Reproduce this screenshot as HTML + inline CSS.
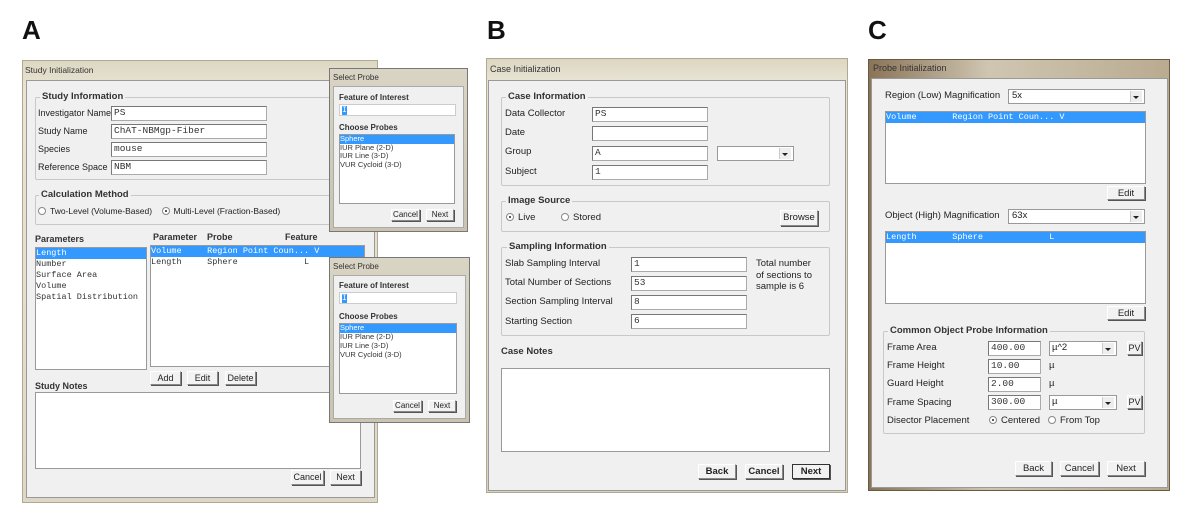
<!DOCTYPE html><html><head><style>
*{box-sizing:border-box;margin:0;padding:0}
body{width:1200px;height:523px;background:#fff;position:relative;overflow:hidden;font-family:"Liberation Sans",sans-serif;font-size:9.5px;color:#222}
.a{position:absolute}
.L{position:absolute;font-size:26px;font-weight:bold;color:#111}
.win{position:absolute;background:linear-gradient(90deg,#d9d4c0,#ebe7d6 60%,#d7d0bc);border:1px solid #b0a890}
.inner{position:absolute;background:#f0f0f0;border:1px solid #999}
.tt{position:absolute;font-size:9px;color:#333}
.fs{position:absolute;border:1px solid #c8c8c8;border-radius:2px}
.lg{position:absolute;background:#f0f0f0;font-weight:bold;padding:0 2px;font-size:9.5px;color:#333}
.in{position:absolute;background:#fff;border:1px solid #aaa;border-top-color:#777;border-left-color:#777;font-family:"Liberation Mono",monospace;font-size:9.5px;padding-left:2px;line-height:12px;color:#333}
.lst{position:absolute;background:#fff;border:1px solid #999;font-family:"Liberation Mono",monospace;font-size:8.5px;line-height:11px;color:#333}
.lst2{position:absolute;background:#fff;border:1px solid #999;font-size:8.5px;line-height:11px;color:#333}
.hl{background:#3399ff;color:#fff}
.btn{position:absolute;background:#f2f2f2;border:1px solid #888;border-top-color:#fff;border-left-color:#fff;box-shadow:1px 1px 0 #555;font-size:9.5px;text-align:center;line-height:13px;color:#222}
.dd{position:absolute;background:#fff;border:1px solid #999}
.dd:after{content:"";position:absolute;right:2px;top:1px;bottom:1px;width:11px;background:#eee;border-left:1px solid #ccc}
.dd i{position:absolute;right:5px;top:50%;margin-top:-1px;border:3px solid transparent;border-top:3px solid #222;z-index:2}
.rb{display:inline-block;width:8px;height:8px;border-radius:50%;border:1px solid #888;background:#fff;vertical-align:-1px;margin-right:4px;position:relative}
.rb.on:after{content:"";position:absolute;left:2px;top:2px;width:2px;height:2px;background:#222;border-radius:50%}
.pa .a{font-size:9px}
</style></head><body>
<div class="L" style="left:22px;top:15px">A</div>
<div class="L" style="left:487px;top:15px">B</div>
<div class="L" style="left:868px;top:15px">C</div>

<!-- Panel A -->
<div class="pa">
<div class="win" style="left:22px;top:60px;width:356px;height:443px;background:linear-gradient(180deg,#ddd8c4,#e9e5d4 30px,#ddd8c6)"></div>
<div class="tt" style="left:25px;top:65px;font-size:8.5px">Study Initialization</div>
<div class="inner" style="left:26px;top:80px;width:349px;height:418px"></div>
<div class="fs" style="left:35px;top:97px;width:300px;height:83px"></div>
<div class="lg" style="left:40px;top:91px">Study Information</div>
<div class="a" style="left:38px;top:108px">Investigator Name</div>
<div class="a" style="left:38px;top:126px">Study Name</div>
<div class="a" style="left:38px;top:144px">Species</div>
<div class="a" style="left:38px;top:162px">Reference Space</div>
<div class="in" style="left:111px;top:106px;width:156px;height:15px">PS</div>
<div class="in" style="left:111px;top:124px;width:156px;height:15px">ChAT-NBMgp-Fiber</div>
<div class="in" style="left:111px;top:142px;width:156px;height:15px">mouse</div>
<div class="in" style="left:111px;top:160px;width:156px;height:15px">NBM</div>
<div class="fs" style="left:35px;top:195px;width:300px;height:30px"></div>
<div class="lg" style="left:39px;top:189px">Calculation Method</div>
<div class="a" style="left:38px;top:206px;font-size:8.5px"><span class="rb"></span>Two-Level (Volume-Based) &nbsp;&nbsp;&nbsp;<span class="rb on"></span>Multi-Level (Fraction-Based)</div>
<div class="a" style="left:35px;top:234px;font-weight:bold;color:#333">Parameters</div>
<div class="a" style="left:153px;top:232px;font-weight:bold;color:#333">Parameter</div>
<div class="a" style="left:207px;top:232px;font-weight:bold;color:#333">Probe</div>
<div class="a" style="left:285px;top:232px;font-weight:bold;color:#333">Feature</div>
<div class="lst" style="left:35px;top:247px;width:112px;height:123px"><div class="hl">Length</div><div>Number</div><div>Surface Area</div><div>Volume</div><div>Spatial Distribution</div></div>
<div class="lst" style="left:150px;top:245px;width:215px;height:122px"><div class="hl" style="white-space:pre">Volume     Region Point Coun... V</div><div style="white-space:pre">Length     Sphere             L</div></div>
<div class="btn" style="left:150px;top:371px;width:31px;height:14px;font-size:9px">Add</div>
<div class="btn" style="left:187px;top:371px;width:31px;height:14px;font-size:9px">Edit</div>
<div class="btn" style="left:225px;top:371px;width:31px;height:14px;font-size:9px">Delete</div>
<div class="a" style="left:35px;top:381px;font-weight:bold;color:#333">Study Notes</div>
<div class="lst" style="left:35px;top:392px;width:326px;height:77px"></div>
<div class="btn" style="left:291px;top:470px;width:33px;height:15px;font-size:9px">Cancel</div>
<div class="btn" style="left:330px;top:470px;width:31px;height:15px;font-size:9px">Next</div>
</div>

<!-- select probe 1 -->
<div class="win" style="left:329px;top:68px;width:139px;height:164px;background:linear-gradient(#d9d4c4,#c9c3b0);border-color:#777"></div>
<div class="tt" style="left:333px;top:73px;font-size:8px">Select Probe</div>
<div class="inner" style="left:333px;top:86px;width:131px;height:142px;border-color:#aaa"></div>
<div class="a" style="left:339px;top:93px;font-size:8px;font-weight:bold;color:#333">Feature of Interest</div>
<div class="in" style="left:339px;top:104px;width:117px;height:12px;line-height:10px;border-color:#ccc"><span class="hl" style="font-size:8px">I</span></div>
<div class="a" style="left:339px;top:123px;font-size:8px;font-weight:bold;color:#333">Choose Probes</div>
<div class="lst2" style="left:339px;top:134px;width:116px;height:70px;font-size:7.5px;line-height:8.7px"><div class="hl">Sphere</div><div>IUR Plane (2-D)</div><div>IUR Line (3-D)</div><div>VUR Cycloid (3-D)</div></div>
<div class="btn" style="left:391px;top:209px;width:29px;height:12px;font-size:8px;line-height:10px">Cancel</div>
<div class="btn" style="left:426px;top:209px;width:28px;height:12px;font-size:8px;line-height:10px">Next</div>

<!-- select probe 2 -->
<div class="win" style="left:329px;top:257px;width:141px;height:166px;background:linear-gradient(#d9d4c4,#c9c3b0);border-color:#777"></div>
<div class="tt" style="left:333px;top:262px;font-size:8px">Select Probe</div>
<div class="inner" style="left:333px;top:275px;width:133px;height:144px;border-color:#aaa"></div>
<div class="a" style="left:339px;top:281px;font-size:8px;font-weight:bold;color:#333">Feature of Interest</div>
<div class="in" style="left:339px;top:292px;width:118px;height:12px;line-height:10px;border-color:#ccc"><span class="hl" style="font-size:8px">I</span></div>
<div class="a" style="left:339px;top:312px;font-size:8px;font-weight:bold;color:#333">Choose Probes</div>
<div class="lst2" style="left:339px;top:323px;width:118px;height:71px;font-size:7.5px;line-height:8.9px"><div class="hl">Sphere</div><div>IUR Plane (2-D)</div><div>IUR Line (3-D)</div><div>VUR Cycloid (3-D)</div></div>
<div class="btn" style="left:393px;top:400px;width:29px;height:12px;font-size:8px;line-height:10px">Cancel</div>
<div class="btn" style="left:428px;top:400px;width:28px;height:12px;font-size:8px;line-height:10px">Next</div>

<!-- Panel B -->
<div class="win" style="left:486px;top:58px;width:362px;height:435px;background:linear-gradient(180deg,#dcd6c2,#e8e4d4 22px,#d9d3c1)"></div>
<div class="tt" style="left:490px;top:64px">Case Initialization</div>
<div class="inner" style="left:488px;top:80px;width:358px;height:411px"></div>
<div class="fs" style="left:501px;top:97px;width:329px;height:89px"></div>
<div class="lg" style="left:506px;top:91px">Case Information</div>
<div class="a" style="left:505px;top:108px">Data Collector</div>
<div class="a" style="left:505px;top:127px">Date</div>
<div class="a" style="left:505px;top:146px">Group</div>
<div class="a" style="left:505px;top:166px">Subject</div>
<div class="in" style="left:592px;top:107px;width:116px;height:15px">PS</div>
<div class="in" style="left:592px;top:126px;width:116px;height:15px"></div>
<div class="in" style="left:592px;top:146px;width:116px;height:15px">A</div>
<div class="in" style="left:592px;top:165px;width:116px;height:15px">1</div>
<div class="dd" style="left:717px;top:146px;width:77px;height:15px"><i></i></div>
<div class="fs" style="left:501px;top:201px;width:329px;height:31px"></div>
<div class="lg" style="left:506px;top:195px">Image Source</div>
<div class="a" style="left:506px;top:212px"><span class="rb on"></span>Live</div>
<div class="a" style="left:561px;top:212px"><span class="rb"></span>Stored</div>
<div class="btn" style="left:780px;top:210px;width:38px;height:16px">Browse</div>
<div class="fs" style="left:501px;top:247px;width:329px;height:89px"></div>
<div class="lg" style="left:507px;top:241px">Sampling Information</div>
<div class="a" style="left:505px;top:258px">Slab Sampling Interval</div>
<div class="a" style="left:505px;top:277px">Total Number of Sections</div>
<div class="a" style="left:505px;top:296px">Section Sampling Interval</div>
<div class="a" style="left:505px;top:316px">Starting Section</div>
<div class="in" style="left:631px;top:257px;width:116px;height:15px">1</div>
<div class="in" style="left:631px;top:276px;width:116px;height:15px">53</div>
<div class="in" style="left:631px;top:295px;width:116px;height:15px">8</div>
<div class="in" style="left:631px;top:314px;width:116px;height:15px">6</div>
<div class="a" style="left:756px;top:258px;line-height:11.5px">Total number<br>of sections to<br>sample is 6</div>
<div class="a" style="left:501px;top:346px;font-weight:bold;color:#333">Case Notes</div>
<div class="lst" style="left:501px;top:368px;width:329px;height:84px"></div>
<div class="btn" style="left:698px;top:464px;width:38px;height:15px;font-weight:bold">Back</div>
<div class="btn" style="left:745px;top:464px;width:38px;height:15px;font-weight:bold">Cancel</div>
<div class="btn" style="left:792px;top:464px;width:38px;height:15px;font-weight:bold;border:1px solid #333">Next</div>

<!-- Panel C -->
<div class="win" style="left:868px;top:59px;width:302px;height:432px;background:linear-gradient(90deg,#8a7458,#cfc6b2 40%,#b9ab90);border-color:#6a5a40"></div>
<div class="tt" style="left:873px;top:63px">Probe Initialization</div>
<div class="inner" style="left:871px;top:78px;width:297px;height:410px"></div>
<div class="a" style="left:885px;top:90px">Region (Low) Magnification</div>
<div class="dd" style="left:1008px;top:89px;width:137px;height:15px"><span style="padding-left:3px">5x</span><i></i></div>
<div class="lst" style="left:885px;top:111px;width:261px;height:73px"><div class="hl" style="white-space:pre">Volume       Region Point Coun... V</div></div>
<div class="btn" style="left:1107px;top:186px;width:38px;height:14px">Edit</div>
<div class="a" style="left:885px;top:210px">Object (High) Magnification</div>
<div class="dd" style="left:1008px;top:209px;width:137px;height:15px"><span style="padding-left:3px">63x</span><i></i></div>
<div class="lst" style="left:885px;top:231px;width:261px;height:73px"><div class="hl" style="white-space:pre">Length       Sphere             L</div></div>
<div class="btn" style="left:1107px;top:306px;width:38px;height:14px">Edit</div>
<div class="fs" style="left:883px;top:331px;width:262px;height:103px"></div>
<div class="lg" style="left:888px;top:325px">Common Object Probe Information</div>
<div class="a" style="left:887px;top:342px">Frame Area</div>
<div class="a" style="left:887px;top:360px">Frame Height</div>
<div class="a" style="left:887px;top:378px">Guard Height</div>
<div class="a" style="left:887px;top:397px">Frame Spacing</div>
<div class="a" style="left:887px;top:415px">Disector Placement</div>
<div class="in" style="left:988px;top:341px;width:53px;height:15px">400.00</div>
<div class="in" style="left:988px;top:359px;width:53px;height:15px">10.00</div>
<div class="in" style="left:988px;top:377px;width:53px;height:15px">2.00</div>
<div class="in" style="left:988px;top:395px;width:53px;height:15px">300.00</div>
<div class="dd" style="left:1049px;top:341px;width:68px;height:15px"><span style="padding-left:2px">µ^2</span><i></i></div>
<div class="dd" style="left:1049px;top:395px;width:68px;height:15px"><span style="padding-left:2px">µ</span><i></i></div>
<div class="a" style="left:1049px;top:360px">µ</div>
<div class="a" style="left:1049px;top:378px">µ</div>
<div class="btn" style="left:1127px;top:341px;width:15px;height:14px;font-size:9px">PV</div>
<div class="btn" style="left:1127px;top:395px;width:15px;height:14px;font-size:9px">PV</div>
<div class="a" style="left:989px;top:415px"><span class="rb on"></span>Centered &nbsp;&nbsp;<span class="rb"></span>From Top</div>
<div class="btn" style="left:1015px;top:461px;width:37px;height:15px">Back</div>
<div class="btn" style="left:1060px;top:461px;width:39px;height:15px">Cancel</div>
<div class="btn" style="left:1107px;top:461px;width:38px;height:15px">Next</div>
</body></html>
